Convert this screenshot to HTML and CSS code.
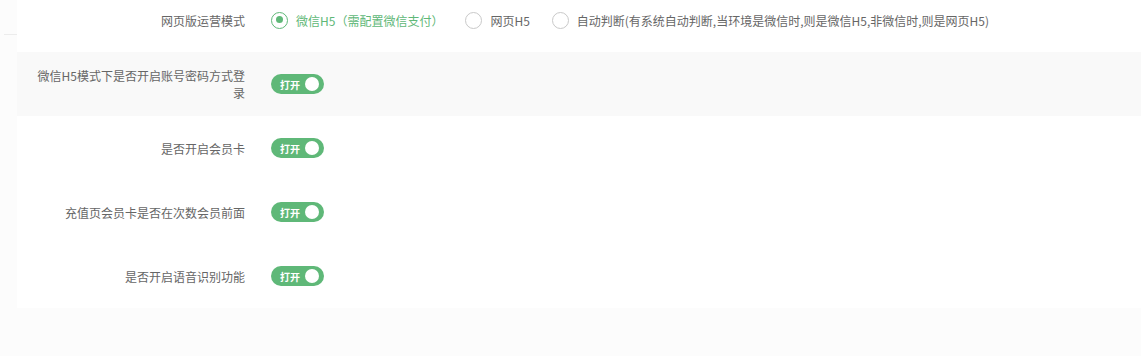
FILE: index.html
```html
<!DOCTYPE html>
<html lang="zh-CN">
<head>
  <meta charset="UTF-8">
  <title>网页版设置</title>
  <link rel="stylesheet" href="styles.css">
</head>
<body>
  <div class="page">
    <div class="gutter"><div class="gutter-line"></div></div>

    <div class="panel">
      <!-- 运营模式 -->
      <div class="row">
        <div class="label">网页版运营模式</div>
        <div class="control">
          <span class="radio checked"><i class="radio-icon"></i>微信H5（需配置微信支付）</span>
          <span class="radio"><i class="radio-icon"></i>网页H5</span>
          <span class="radio"><i class="radio-icon"></i>自动判断(有系统自动判断,当环境是微信时,则是微信H5,非微信时,则是网页H5)</span>
        </div>
      </div>

      <div class="row striped">
        <div class="label">微信H5模式下是否开启账号密码方式登录</div>
        <div class="control">
          <span class="switch"><em>打开</em><i></i></span>
        </div>
      </div>

      <div class="row">
        <div class="label">是否开启会员卡</div>
        <div class="control">
          <span class="switch"><em>打开</em><i></i></span>
        </div>
      </div>

      <div class="row">
        <div class="label">充值页会员卡是否在次数会员前面</div>
        <div class="control">
          <span class="switch"><em>打开</em><i></i></span>
        </div>
      </div>

      <div class="row">
        <div class="label">是否开启语音识别功能</div>
        <div class="control">
          <span class="switch"><em>打开</em><i></i></span>
        </div>
      </div>
    </div>
  </div>
</body>
</html>
```

FILE: styles.css
```css
body {
  margin: 0;
  padding: 0;
  font-family: "Microsoft YaHei", "Noto Sans CJK SC", "Noto Sans", sans-serif;
  font-size: 12px;
  color: #666;
  background-color: #fcfcfc;
}
.page {
  display: flex;
  align-items: flex-start;
}
.gutter {
  width: 17px;
  flex-shrink: 0;
}
.gutter-line {
  margin: 34px 0 0 4px;
  height: 1px;
  background-color: #ececec;
}
.panel {
  flex: 1;
  margin-top: -12px;
  background-color: #fff;
}
.row {
  display: flex;
  align-items: center;
  height: 64px;
}
.row.striped {
  background-color: #f9f9f9;
}
.label {
  width: 208px;
  padding-left: 20px;
  text-align: right;
  line-height: 17px;
  flex-shrink: 0;
}
.control {
  margin-left: 26px;
  display: flex;
  align-items: center;
}
/* radio */
.radio {
  display: inline-flex;
  align-items: center;
  margin-right: 22px;
  line-height: 17px;
}
.radio-icon {
  width: 17px;
  height: 17px;
  box-sizing: border-box;
  border: 1.5px solid #c9c9c9;
  border-radius: 50%;
  margin-right: 8px;
  position: relative;
}
.radio.checked {
  color: #5fb878;
}
.radio.checked .radio-icon {
  border-color: #5fb878;
}
.radio.checked .radio-icon:after {
  content: "";
  position: absolute;
  top: 3.5px;
  left: 3.5px;
  width: 7px;
  height: 7px;
  border-radius: 50%;
  background-color: #5fb878;
}
/* switch */
.switch {
  display: inline-flex;
  align-items: center;
  justify-content: space-between;
  box-sizing: border-box;
  width: 53px;
  height: 20px;
  padding: 0 5px 0 9px;
  border-radius: 10px;
  background-color: #5fb878;
}
.switch em {
  font-style: normal;
  font-size: 10px;
  font-weight: bold;
  color: #fff;
}
.switch i {
  width: 14px;
  height: 14px;
  border-radius: 50%;
  background-color: #fff;
}
```
